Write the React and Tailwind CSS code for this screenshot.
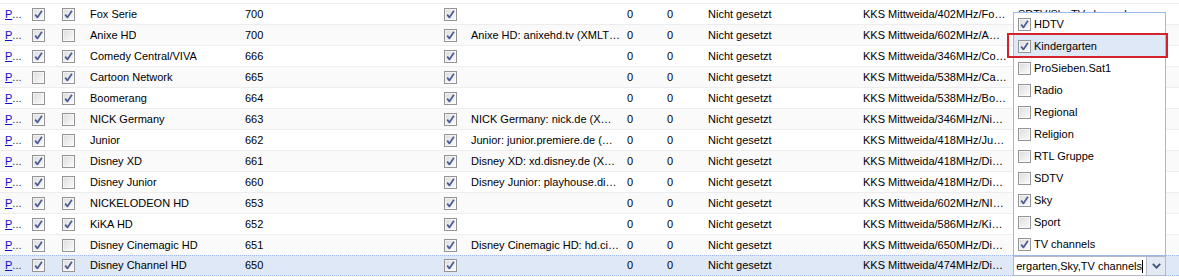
import React from "react";

const rows = [
  { id: "Fox Serie", num: "700", a: true, b: true, desc: "", kks: "402MHz/Fox Serie" },
  { id: "Anixe HD", num: "700", a: true, b: false, desc: "Anixe HD: anixehd.tv (XMLTV-Import)", kks: "602MHz/ANIXE HD" },
  { id: "Comedy Central/VIVA", num: "666", a: true, b: true, desc: "", kks: "346MHz/Comedy Central" },
  { id: "Cartoon Network", num: "665", a: false, b: true, desc: "", kks: "538MHz/Cartoon Network" },
  { id: "Boomerang", num: "664", a: false, b: true, desc: "", kks: "538MHz/Boomerang" },
  { id: "NICK Germany", num: "663", a: true, b: false, desc: "NICK Germany: nick.de (XMLTV)", kks: "346MHz/Nick Germany" },
  { id: "Junior", num: "662", a: true, b: false, desc: "Junior: junior.premiere.de (XMLTV)", kks: "418MHz/Junior" },
  { id: "Disney XD", num: "661", a: true, b: false, desc: "Disney XD: xd.disney.de (XMLTV)", kks: "418MHz/Disney XD" },
  { id: "Disney Junior", num: "660", a: true, b: false, desc: "Disney Junior: playhouse.disney.de", kks: "418MHz/Disney Junior" },
  { id: "NICKELODEON HD", num: "653", a: true, b: true, desc: "", kks: "602MHz/NICKELODEON HD" },
  { id: "KiKA HD", num: "652", a: true, b: true, desc: "", kks: "586MHz/KiKA HD" },
  { id: "Disney Cinemagic HD", num: "651", a: true, b: false, desc: "Disney Cinemagic HD: hd.cinemagic.de", kks: "650MHz/Disney Cinemagic" },
  { id: "Disney Channel HD", num: "650", a: true, b: true, desc: "", kks: "474MHz/Disney Channel HD" },
];

const groups = [
  { label: "HDTV", on: true },
  { label: "Kindergarten", on: true, hover: true },
  { label: "ProSieben.Sat1", on: false },
  { label: "Radio", on: false },
  { label: "Regional", on: false },
  { label: "Religion", on: false },
  { label: "RTL Gruppe", on: false },
  { label: "SDTV", on: false },
  { label: "Sky", on: true },
  { label: "Sport", on: false },
  { label: "TV channels", on: true },
];

const Check = ({ on }) => (
  <svg width="13" height="13" viewBox="0 0 13 13" className="shrink-0">
    <defs>
      <linearGradient id="cbg" x1="0" y1="0" x2="1" y2="1">
        <stop offset="0" stopColor="#dedede" />
        <stop offset="1" stopColor="#fafafa" />
      </linearGradient>
    </defs>
    <rect x="0.5" y="0.5" width="12" height="12" fill="#fff" stroke="#939495" />
    <rect x="1.5" y="1.5" width="10" height="10" fill="url(#cbg)" />
    {on && (
      <path
        d="M3.2 6.6 L5.4 9.4 L9.9 2.8"
        fill="none"
        stroke="#4a5a95"
        strokeWidth="1.7"
        strokeLinejoin="round"
      />
    )}
  </svg>
);

const Cell = ({ w, children, className = "" }) => (
  <div className={`shrink-0 h-full flex items-center overflow-hidden ${w} ${className}`}>
    {children}
  </div>
);

const Clip = ({ children }) => <span className="block min-w-0 truncate">{children}</span>;

const App = () => {
  return (
    <div
      className="relative w-[1179px] h-[280px] overflow-hidden bg-white text-[11px] text-black"
      style={{ fontFamily: '"Liberation Sans", Arial, sans-serif' }}
    >
      <div className="h-[3px]" />
      {rows.map((r, i) => {
        const sel = i === rows.length - 1;
        return (
          <div
            key={r.id}
            className={`flex h-[21px] ${
              sel
                ? "bg-[#dfe8f6] border-y border-dotted border-[#a3bae9]"
                : `border-t border-[#ededed] ${i % 2 === 1 ? "bg-[#fafafa]" : "bg-white"}`
            }`}
          >
            <Cell w="w-[27px]" className="pl-[5px]">
              <span className="underline text-[#1010cc]">P</span>
              <span className="text-[#333]">...</span>
            </Cell>
            <Cell w="w-[30px]" className="pl-[5px]">
              <Check on={r.a} />
            </Cell>
            <Cell w="w-[28px]" className="pl-[5px]">
              <Check on={r.b} />
            </Cell>
            <Cell w="w-[155px]" className="pl-[5px]">
              <Clip>{r.id}</Clip>
            </Cell>
            <Cell w="w-[200px]" className="pl-[5px]">
              {r.num}
            </Cell>
            <Cell w="w-[26px]" className="pl-[4px]">
              <Check on />
            </Cell>
            <Cell w="w-[156px]" className="pl-[5px] pr-[2px]">
              <Clip>{r.desc}</Clip>
            </Cell>
            <Cell w="w-[40px]" className="pl-[5px]">0</Cell>
            <Cell w="w-[41px]" className="pl-[5px]">0</Cell>
            <Cell w="w-[155px]" className="pl-[5px]">Nicht gesetzt</Cell>
            <Cell w="w-[155px]" className="pl-[5px] pr-[6px]">
              <Clip>KKS Mittweida/{r.kks}</Clip>
            </Cell>
            <Cell w="flex-1" className="pl-[5px] pr-[5px]">
              {i === 0 && <Clip>SDTV/Sky,TV channels</Clip>}
            </Cell>
          </div>
        );
      })}

      {/* group picker list */}
      <div className="absolute left-[1013px] top-[12px] w-[153px] h-[244px] bg-white border border-[#99bbe8]">
        {groups.map((g) => (
          <div
            key={g.label}
            className={`h-[22px] flex items-center gap-[2px] pl-[4px] ${
              g.hover ? "bg-[#dfe8f6]" : ""
            }`}
          >
            <Check on={g.on} />
            <span className="pl-[1px]">{g.label}</span>
          </div>
        ))}
      </div>

      {/* highlight marker */}
      <div className="absolute left-[1007px] top-[33px] w-[161px] h-[25px] border-2 border-[#d4212b]" />

      {/* combo editor */}
      <div className="absolute left-[1013px] top-[256px] flex h-[20px]">
        <div className="w-[134px] h-full bg-white border border-[#b5b8c8] flex items-center justify-end overflow-hidden pr-[3px]">
          <span className="whitespace-nowrap">ergarten,Sky,TV channels</span>
          <span className="w-px h-[13px] bg-black shrink-0" />
        </div>
        <div className="w-[19px] h-full border border-l-0 border-[#b5b8c8] bg-[#e3eaf4] flex items-center justify-center">
          <svg width="9" height="6" viewBox="0 0 9 6">
            <path d="M0.8 0.8 L4.5 4.6 L8.2 0.8" fill="none" stroke="#3d5480" strokeWidth="1.8" />
          </svg>
        </div>
      </div>
    </div>
  );
};

export default App;
